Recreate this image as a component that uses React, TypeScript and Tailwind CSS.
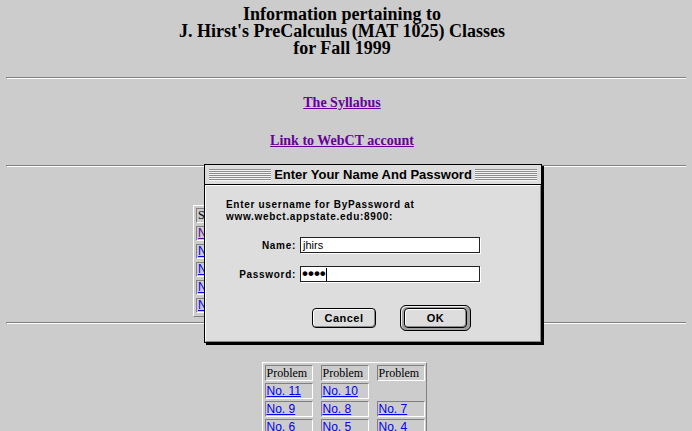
const rule =
  "mx-[6px] h-[2px] border-t border-l border-t-[#808080] border-l-[#808080] border-b border-b-white";

const Stripes = () => (
  <div className="flex flex-1 flex-col">
    {[0, 1, 2, 3, 4, 5].map((i) => (
      <div key={i}>
        <div className="h-px bg-[#8c8c8c]" />
        <div className="h-px bg-[#f4f4f4]" />
      </div>
    ))}
  </div>
);

const cell =
  "h-[15px] border border-t-[#808080] border-l-[#808080] border-r-white border-b-white px-[1px] text-[12px] leading-[13px] whitespace-nowrap overflow-hidden";

const bcell =
  "h-[16px] border border-t-[#808080] border-l-[#808080] border-r-white border-b-white px-[1px] leading-[14px] whitespace-nowrap";

const sans = "font-['Liberation_Sans',Arial,sans-serif]";

const problems = [
  ["No. 11", "No. 10", ""],
  ["No. 9", "No. 8", "No. 7"],
  ["No. 6", "No. 5", "No. 4"],
  ["No. 3", "No. 2", "No. 1"],
];

export default function App() {
  return (
    <div className="relative h-[431px] w-[692px] overflow-hidden bg-[#cccccc] font-['Liberation_Serif','Times_New_Roman',serif] text-black">
      <h2 className="pr-[8px] pt-[6px] text-center text-[18px] font-bold leading-[17px]">
        Information pertaining to
        <br />
        J. Hirst's PreCalculus (MAT 1025) Classes
        <br />
        for Fall 1999
      </h2>

      <div className={`${rule} mt-[20px]`} />

      <p className="mt-[16px] pr-[8px] text-center text-[14px] font-bold leading-[16px]">
        <a href="#" className="text-[#660099] underline">
          The Syllabus
        </a>
      </p>
      <p className="mt-[22px] pr-[8px] text-center text-[14px] font-bold leading-[16px]">
        <a href="#" className="text-[#660099] underline">
          Link to WebCT account
        </a>
      </p>

      <div className={`${rule} mt-[16px]`} />

      {/* section table, mostly hidden behind the dialog */}
      <div className="mx-auto mt-[38px] flex h-[112px] w-[306px] flex-col gap-[3px] border border-t-white border-l-white border-r-[#808080] border-b-[#808080] p-[2px]">
        <div className="flex gap-[3px]">
          <div className={`${cell} w-[70px]`}>Section</div>
          <div className={`${cell} w-[70px]`}>Time</div>
        </div>
        {["No. 101", "No. 102", "No. 103", "No. 104", "No. 105"].map((s, i) => (
          <div key={s} className="flex gap-[3px]">
            <div className={`${cell} w-[70px] ${sans}`}>
              <a
                href="#"
                className={i === 0 ? "text-[#660099] underline" : "text-[#0000ee] underline"}
              >
                {s}
              </a>
            </div>
          </div>
        ))}
      </div>

      <div className={`${rule} mt-[5px]`} />

      <div className="pr-[4px]">
        <div className="mx-auto mt-[38px] grid w-[165px] grid-cols-[48px_48px_48px] gap-x-[8px] gap-y-[2px] border border-t-white border-l-white border-r-[#808080] border-b-[#808080] pt-[2px] pl-[2px] pr-[1px] text-[12px]">
          <div className={bcell}>Problem</div>
          <div className={bcell}>Problem</div>
          <div className={bcell}>Problem</div>
          {problems.flat().map((p, i) =>
            p ? (
              <div key={i} className={`${bcell} ${sans}`}>
                <a href="#" className="text-[#0000ee] underline">
                  {p}
                </a>
              </div>
            ) : (
              <div key={i} className="h-[16px]" />
            )
          )}
        </div>
      </div>

      {/* password dialog */}
      <div className={`absolute left-[204px] top-[164px] flex h-[179px] w-[338px] flex-col border border-black bg-[#dddddd] shadow-[2px_2px_0_#000] ${sans}`}>
        <div className="flex h-[20px] shrink-0 items-center gap-[3px] border-b border-black px-[4px]">
          <Stripes />
          <span className="text-[13px] font-bold leading-[14px]">
            Enter Your Name And Password
          </span>
          <Stripes />
        </div>
        <div className="flex-1 border border-t-white border-l-white border-r-[#888] border-b-[#888]">
          <div className="pl-[20px] pt-[13px] text-[10px] font-bold leading-[12px] tracking-[0.7px]">
            Enter username for ByPassword at
            <br />
            www.webct.appstate.edu:8900:
          </div>
          <div className="mt-[14px] grid grid-cols-[70px_180px] items-center gap-x-[4px] gap-y-[13px] pl-[20px]">
            <span className="text-right text-[10px] font-bold tracking-[0.7px]">Name:</span>
            <div className="flex h-[16px] items-center border border-[#222] bg-white pl-[2px] text-[11px] shadow-[1px_1px_0_#fff]">
              jhirs
            </div>
            <span className="text-right text-[10px] font-bold tracking-[0.7px]">Password:</span>
            <div className="flex h-[16px] items-center border border-[#222] bg-white pl-[1px] shadow-[1px_1px_0_#fff]">
              <span className="text-[17px] font-bold leading-[14px]">••••</span>
              <span className="h-[13px] w-px bg-black" />
            </div>
          </div>
          <div className="ml-[106px] mt-[23px] flex items-center gap-[24px]">
            <button className="h-[20px] w-[64px] rounded-[4px] border border-black bg-[#dddddd] text-[11px] font-bold tracking-[0.5px] shadow-[inset_1px_1px_0_#fff,inset_-1px_-1px_0_#888]">
              Cancel
            </button>
            <div className="flex h-[26px] w-[71px] items-center justify-center rounded-[6px] border border-black bg-[#a0a0a0] shadow-[inset_1px_1px_0_#eee]">
              <button className="h-[20px] w-[63px] rounded-[4px] border border-black bg-[#dddddd] text-[11px] font-bold tracking-[0.5px] shadow-[inset_1px_1px_0_#fff,inset_-1px_-1px_0_#888]">
                OK
              </button>
            </div>
          </div>
        </div>
      </div>
    </div>
  );
}
